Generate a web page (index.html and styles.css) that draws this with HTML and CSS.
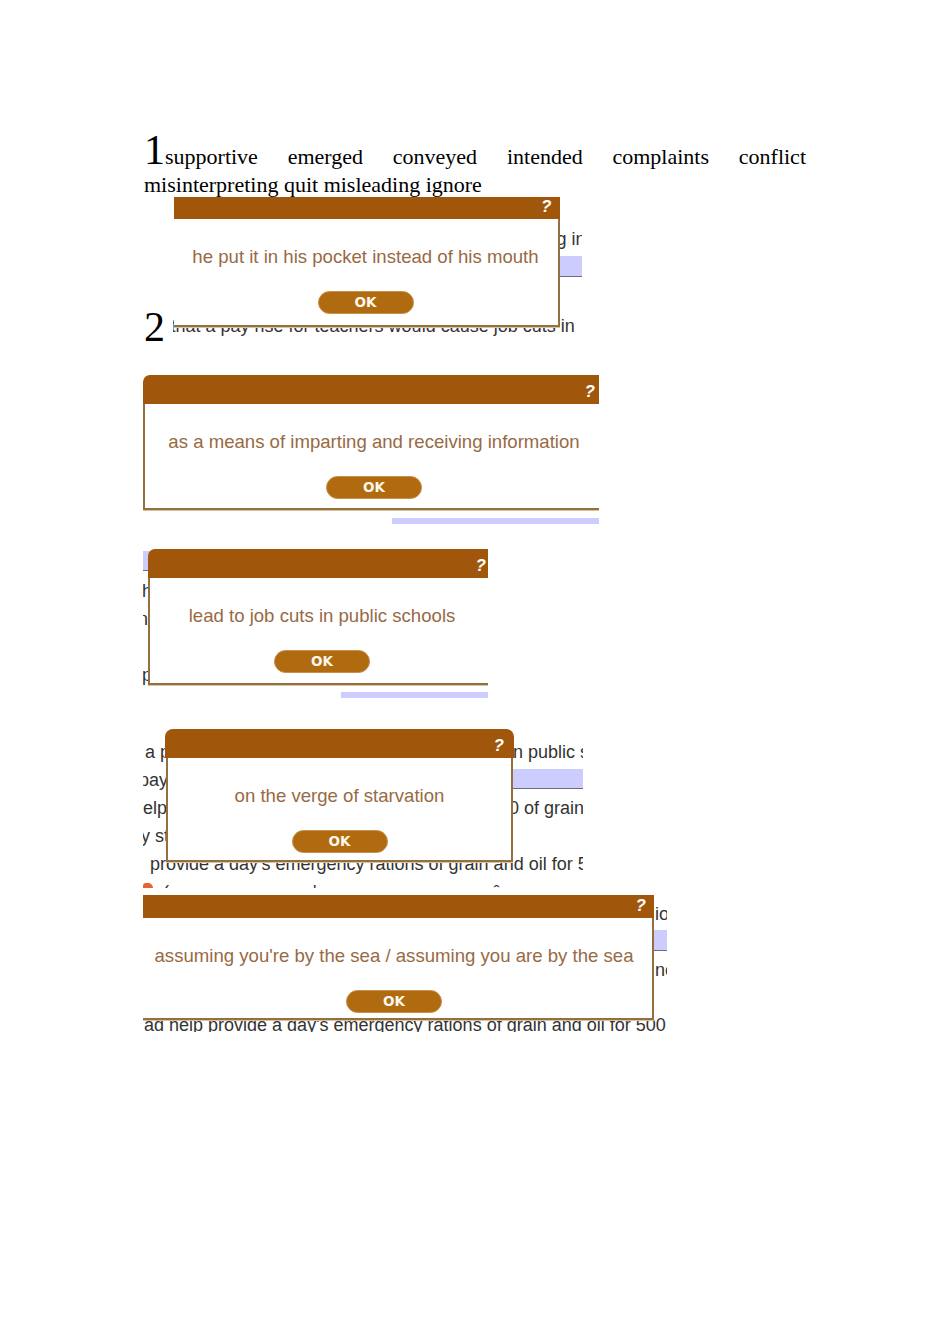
FILE: index.html
```html
<!DOCTYPE html>
<html lang="en">
<head>
<meta charset="utf-8">
<title>Exercises</title>
<link rel="stylesheet" href="styles.css">
</head>
<body>
<div class="page">
  <p class="words"><span class="num">1</span>supportive emerged conveyed intended complaints conflict misinterpreting quit misleading ignore</p>

  <p class="line2"><span class="num">2</span> <span class="shot shot1">
      <span class="bgt s1a">teaching in</span>
      <span class="lav s1lav"></span>
      <span class="bgt s1b">that a pay rise for teachers would cause job cuts in</span>
      <span class="dialog d1">
        <span class="dlg-title"><span class="help">?</span></span>
        <span class="dlg-body">
          <span class="dlg-text">he put it in his pocket instead of his mouth</span>
          <span class="ok">OK</span>
        </span>
      </span>
    </span></p>

  <div class="shot shot2">
    <span class="lav s2lav"></span>
    <div class="dialog d2">
      <div class="dlg-title"><span class="help">?</span></div>
      <div class="dlg-body">
        <span class="dlg-text">as a means of imparting and receiving information</span>
        <span class="ok">OK</span>
      </div>
    </div>
  </div>

  <div class="shot shot3">
    <span class="lav s3lav1"></span>
    <span class="bgt s3a">help the</span>
    <span class="bgt s3b">need</span>
    <span class="bgt s3c">provide</span>
    <span class="lav s3lav2"></span>
    <div class="dialog d3">
      <div class="dlg-title"><span class="help">?</span></div>
      <div class="dlg-body">
        <span class="dlg-text">lead to job cuts in public schools</span>
        <span class="ok">OK</span>
      </div>
    </div>
  </div>

  <div class="shot shot4">
    <span class="bgt s4a">a pay rise for teachers would lead to job cuts</span>
    <span class="bgt s4ar">in public schools</span>
    <span class="bgt s4b">pay</span>
    <span class="lav s4lav"></span>
    <span class="bgt s4c">help</span>
    <span class="bgt s4cr">500 of grain</span>
    <span class="bgt s4d">by starvation</span>
    <span class="bgt s4e">provide a day's emergency rations of grain and oil for 500</span>
    <span class="icon-dot s4icon"></span>
    <span class="bgt s4f">( a s &nbsp; ' &nbsp; &nbsp; &nbsp; ô</span>
    <div class="dialog d4">
      <div class="dlg-title"><span class="help">?</span></div>
      <div class="dlg-body">
        <span class="dlg-text">on the verge of starvation</span>
        <span class="ok">OK</span>
      </div>
    </div>
  </div>

  <div class="shot shot5">
    <span class="bgt s5a">ion</span>
    <span class="lav s5lav"></span>
    <span class="bgt s5b">nce</span>
    <span class="bgt s5c">ad help provide a day's emergency rations of grain and oil for 500</span>
    <div class="dialog d5">
      <div class="dlg-title"><span class="help">?</span></div>
      <div class="dlg-body">
        <span class="dlg-text">assuming you're by the sea / assuming you are by the sea</span>
        <span class="ok">OK</span>
      </div>
    </div>
  </div>
</div>
</body>
</html>
```

FILE: styles.css
```css
html, body {
  margin: 0;
  padding: 0;
  background: #ffffff;
}

.page {
  padding: 0 0 0 144px;
  width: 662px;
  font-family: "Liberation Serif", "Times New Roman", serif;
  font-size: 22px;
  color: #000;
}

.words {
  margin: 129px 0 0 0;
  line-height: 28px;
  text-align: justify;
}

.num {
  font-size: 42px;
  line-height: 42px;
}

.line2 {
  margin: -2px 0 0 0;
  line-height: 28px;
}

/* screenshot frames */
.shot {
  position: relative;
  overflow: hidden;
  background: #fff;
  display: block;
  font-family: "Liberation Sans", Arial, sans-serif;
}

.shot1 {
  display: inline-block;
  width: 409px;
  height: 140px;
  margin: 0 0 4px 2px;
  vertical-align: baseline;
}

.shot2 {
  width: 456px;
  height: 149px;
  margin: 27px 0 0 -1px;
}

.shot3 {
  width: 345px;
  height: 149px;
  margin: 25px 0 0 -1px;
}

.shot4 {
  width: 440px;
  height: 159px;
  margin: 31px 0 0 -1px;
}

.shot5 {
  width: 524px;
  height: 137px;
  margin: 7px 0 0 -1px;
}

/* underlying page fragments */
.bgt {
  position: absolute;
  white-space: nowrap;
  font-family: "Liberation Sans", Arial, sans-serif;
  font-size: 18px;
  line-height: 20px;
  color: #333333;
}

.lav {
  position: absolute;
  height: 20px;
  background: #ccccff;
  border-bottom: 1px solid #6d6d80;
  display: block;
}

.icon-dot {
  position: absolute;
  width: 10px;
  height: 10px;
  border-radius: 3px 5px 5px 3px;
  background: #e8622c;
  display: block;
}

.s1a { top: 32px; right: -4px; }
.s1lav { top: 59px; left: 300px; right: 0; }
.s1b { top: 119px; left: -2px; }

.s2lav { top: 143px; left: 249px; right: 0; }

.s3lav1 { top: 2px; left: 0; width: 100px; height: 19px; }
.s3a { top: 32px; left: -1px; }
.s3b { top: 60px; left: -5px; }
.s3c { top: 116px; left: -1px; }
.s3lav2 { top: 143px; left: 198px; right: 0; }

.s4a { top: 13px; left: 2px; }
.s4ar { top: 13px; left: 366px; }
.s4b { top: 41px; left: -4px; }
.s4lav { top: 40px; left: 200px; right: 0; height: 19px; }
.s4c { top: 69px; left: -10px; }
.s4cr { top: 69px; left: 346px; }
.s4d { top: 97px; left: -12px; }
.s4e { top: 125px; left: 7px; }
.s4icon { top: 154px; left: 0; }
.s4f { top: 153px; left: 20px; word-spacing: 20px; }

.s5a { top: 9px; left: 512px; }
.s5lav { top: 35px; left: 400px; right: 0; }
.s5b { top: 65px; left: 512px; }
.s5c { top: 120px; left: 1px; }

/* dialog */
.dialog {
  position: absolute;
  z-index: 2;
  display: flex;
  flex-direction: column;
}

.dlg-title {
  display: flex;
  justify-content: flex-end;
  align-items: flex-end;
  height: 29px;
  padding: 0 8px 5px 0;
  box-sizing: border-box;
  background: #a0560b;
}

.help {
  color: #ffffff;
  font-family: "Liberation Sans", Arial, sans-serif;
  font-size: 17px;
  font-weight: bold;
  font-style: italic;
  line-height: 14px;
}

.dlg-body {
  display: flex;
  flex-direction: column;
  align-items: center;
  height: 106px;
  padding-top: 28px;
  box-sizing: border-box;
  background: #ffffff;
  border-bottom: 2px solid #94703f;
  box-shadow: 0 1px 0 #d8c3a3;
}

.dlg-text {
  display: block;
  white-space: nowrap;
  font-family: "Liberation Sans", Arial, sans-serif;
  font-size: 18.6px;
  line-height: 20px;
  color: #986a44;
}

.ok {
  display: block;
  margin-top: 24px;
  width: 96px;
  height: 23px;
  border-radius: 12px;
  box-sizing: border-box;
  border: 1px solid #c98f4c;
  background: #b06a10;
  color: #fff8ec;
  font-family: "DejaVu Sans", Verdana, sans-serif;
  font-size: 13.5px;
  font-weight: bold;
  line-height: 21px;
  text-align: center;
}

.d1 { top: -7px; left: 1px; width: 386px; }
.d1 .dlg-body { height: 108px; border-right: 2px solid #94703f; }

.d2 { top: 0; left: 0; width: 460px; }
.d2 .dlg-title { border-top-left-radius: 7px; }
.d2 .dlg-body { border-left: 2px solid #94703f; }

.d3 { top: 0; left: 5px; width: 346px; }
.d3 .dlg-title { border-top-left-radius: 7px; }
.d3 .dlg-body { height: 107px; border-left: 2px solid #94703f; }

.d4 { top: 0; left: 22px; width: 349px; }
.d4 .dlg-title { border-radius: 8px 8px 0 0; padding-right: 10px; }
.d4 .dlg-body { height: 104px; margin: 0 1px; border-left: 2px solid #94703f; border-right: 2px solid #94703f; }

.d5 { top: -6px; left: -7px; width: 518px; }
.d5 .dlg-title { border-top-right-radius: 6px; }
.d5 .dlg-body { height: 102px; border-right: 2px solid #94703f; }
```
